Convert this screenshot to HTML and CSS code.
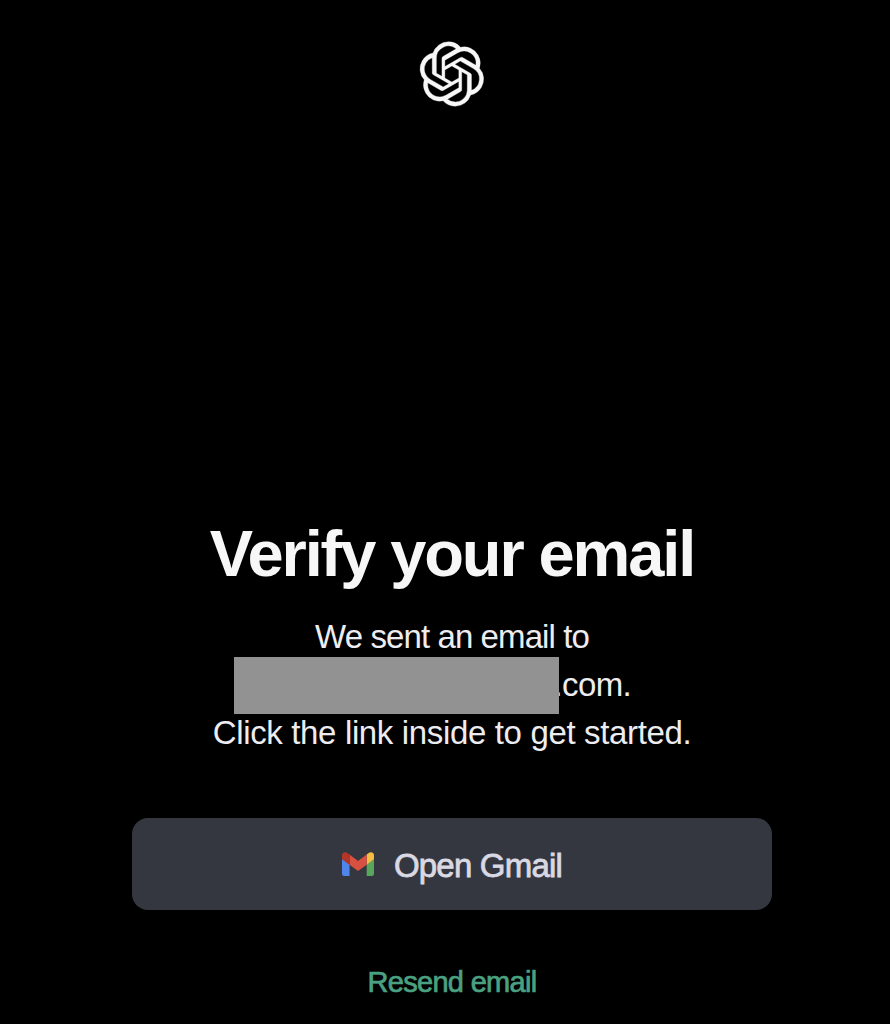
FILE: index.html
```
<!DOCTYPE html>
<html lang="en">
<head>
<meta charset="utf-8">
<title>Verify your email</title>
<link rel="stylesheet" href="styles.css">
</head>
<body>
<div class="page">
  <header class="header">
    <svg class="logo" viewBox="0 0 41 41" role="img" aria-label="OpenAI">
      <path fill="currentColor" stroke="currentColor" stroke-width=".2" d="M37.532 16.87a9.963 9.963 0 0 0-.856-8.184 10.078 10.078 0 0 0-10.855-4.835A9.964 9.964 0 0 0 18.306.5a10.079 10.079 0 0 0-9.614 6.977 9.967 9.967 0 0 0-6.664 4.834 10.08 10.08 0 0 0 1.24 11.817 9.965 9.965 0 0 0 .856 8.185 10.079 10.079 0 0 0 10.855 4.835 9.965 9.965 0 0 0 7.516 3.35 10.078 10.078 0 0 0 9.617-6.981 9.967 9.967 0 0 0 6.663-4.834 10.079 10.079 0 0 0-1.243-11.813ZM22.498 37.886a7.474 7.474 0 0 1-4.799-1.735c.061-.033.168-.091.237-.134l7.964-4.6a1.294 1.294 0 0 0 .655-1.134V19.054l3.366 1.944a.12.12 0 0 1 .066.092v9.299a7.505 7.505 0 0 1-7.49 7.496ZM6.392 31.006a7.471 7.471 0 0 1-.894-5.023c.06.036.162.099.237.141l7.964 4.6a1.297 1.297 0 0 0 1.308 0l9.724-5.614v3.888a.12.12 0 0 1-.048.103l-8.051 4.649a7.504 7.504 0 0 1-10.24-2.744ZM4.297 13.62A7.469 7.469 0 0 1 8.2 10.333c0 .068-.004.19-.004.274v9.201a1.294 1.294 0 0 0 .654 1.132l9.723 5.614-3.366 1.944a.12.12 0 0 1-.114.01L7.04 23.856a7.504 7.504 0 0 1-2.743-10.237Zm27.658 6.437-9.724-5.615 3.367-1.943a.121.121 0 0 1 .113-.01l8.052 4.648a7.498 7.498 0 0 1-1.158 13.528v-9.476a1.293 1.293 0 0 0-.65-1.132Zm3.35-5.043c-.059-.037-.162-.099-.236-.141l-7.965-4.6a1.298 1.298 0 0 0-1.308 0l-9.723 5.614v-3.888a.12.12 0 0 1 .048-.103l8.05-4.645a7.497 7.497 0 0 1 11.135 7.763Zm-21.063 6.929-3.367-1.944a.12.12 0 0 1-.065-.092v-9.299a7.497 7.497 0 0 1 12.293-5.756 6.94 6.94 0 0 0-.236.134l-7.965 4.6a1.294 1.294 0 0 0-.654 1.132l-.006 11.225Zm1.829-3.943 4.33-2.501 4.332 2.5v5l-4.331 2.5-4.331-2.5V18Z"/>
    </svg>
  </header>
  <main class="main">
    <h1 class="title">Verify your email</h1>
    <p class="line line-sent">We sent an email to</p>
    <p class="line address"><span class="redacted"></span><span class="domain">.com.</span></p>
    <p class="line line-click">Click the link inside to get started.</p>
    <button class="button" type="button">
      <svg class="gmail" viewBox="0 0 32 24" aria-hidden="true">
        <path fill="#5086ec" d="M0 7l7.5 5.6V24H2.2A2.2 2.2 0 0 1 0 21.8z"/>
        <path fill="#58a55c" d="M24.7 12.6L32 7v14.8a2.2 2.2 0 0 1-2.2 2.2h-5.1z"/>
        <path fill="#f1bd42" d="M24.7 2.6l2-1.7C29 -.8 32 .6 32 3.3v4l-7.3 5.4z"/>
        <path fill="#d85140" d="M7.5 2.6L16 9l8.7-6.4v10.1L16 19l-8.5-6.3z"/>
        <path fill="#b33629" d="M0 3.3C0 .6 3-.8 5.3.9l2.2 1.7v10.1L0 7.3z"/>
      </svg>
      <span class="button-label">Open Gmail</span>
    </button>
    <a class="resend">Resend email</a>
  </main>
</div>
</body>
</html>
```
FILE: styles.css
```
* { box-sizing: border-box; }
body {
  margin: 0;
  background: #000;
  font-family: "Liberation Sans", Arial, sans-serif;
}
.page {
  height: 1024px;
  padding-left: 14px;
  overflow: hidden;
}
.header {
  display: flex;
  justify-content: center;
  padding-top: 41px;
}
.logo {
  width: 66px;
  height: 66px;
  color: #f7f7f8;
}
.main {
  display: flex;
  flex-direction: column;
  align-items: center;
  padding-top: 407px;
}
.title {
  margin: 0 0 19px;
  font-size: 65px;
  line-height: 80px;
  font-weight: 700;
  letter-spacing: -2.1px;
  color: #f7f7f8;
  white-space: nowrap;
}
.line {
  margin: 0;
  font-size: 33px;
  line-height: 48px;
  letter-spacing: -0.35px;
  color: #ececf1;
  white-space: nowrap;
}
.line-sent { letter-spacing: -0.9px; }
.address {
  display: flex;
  align-items: center;
  height: 48px;
  margin-right: 41px;
}
.redacted {
  z-index: 1;
  flex: none;
  width: 325px;
  height: 57px;
  margin-bottom: -1px;
  background: #929292;
}
.domain {
  width: 76px;
  margin-left: -5px;
  letter-spacing: -0.6px;
}
.button {
  display: flex;
  align-items: center;
  justify-content: center;
  gap: 20px;
  width: 640px;
  height: 92px;
  margin: 61px 0 0;
  padding: 0;
  border: 0;
  border-radius: 16px;
  background: #353740;
  color: #d9d9e3;
  font-family: inherit;
  font-size: 33px;
}
.gmail {
  width: 32px;
  height: 24px;
}
.button-label {
  padding-top: 4px;
  letter-spacing: -0.8px;
  -webkit-text-stroke: 0.8px currentColor;
}
.resend {
  margin-top: 52px;
  font-size: 29px;
  line-height: 40px;
  letter-spacing: -0.7px;
  -webkit-text-stroke: 0.7px currentColor;
  color: #4aa181;
}
```
